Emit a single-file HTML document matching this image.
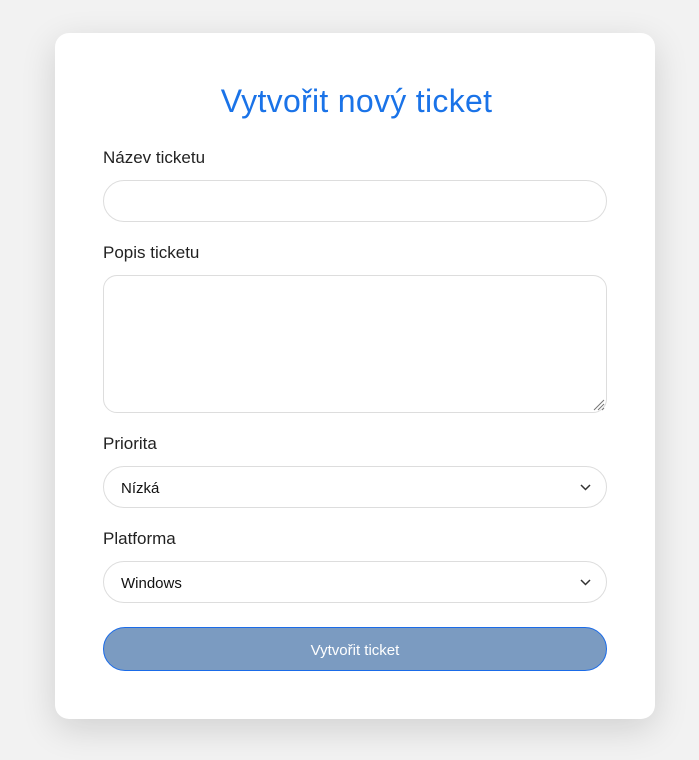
<!DOCTYPE html>
<html><head><meta charset="utf-8"><style>
*{box-sizing:border-box;margin:0;padding:0}
body{width:699px;height:760px;background:#f2f2f2;font-family:"Liberation Sans",sans-serif;position:relative;overflow:hidden}
.card{position:absolute;left:55px;top:33px;width:600px;height:686px;background:#fff;border-radius:14px;box-shadow:0 10px 35px rgba(0,0,0,.14)}
h1{position:absolute;left:0;right:0;top:83px;text-align:center;font-weight:normal;font-size:32px;color:#1a73e8;letter-spacing:0.3px;padding-left:14px}
.l{position:absolute;left:103px;font-size:17px;color:#222}
.f{position:absolute;left:103px;width:504px;border:1px solid #ddd;background:#fff}
.in{height:42px;border-radius:21px}
.ta{top:275px;height:138px;border-radius:14px}
.sel{height:42px;border-radius:21px;font-size:15px;color:#111;padding:13px 0 0 17px}
.sel svg{position:absolute;right:15px;top:17px}
.btn{position:absolute;left:103px;top:627px;width:504px;height:44px;border-radius:22px;background:#7b9bc1;border:1px solid #1a6be8;color:#fff;font-size:15px;text-align:center;line-height:45px}
</style></head><body>
<div class="card"></div>
<h1>Vytvořit nový ticket</h1>
<div class="l" style="top:148px">Název ticketu</div>
<div class="f in" style="top:180px"></div>
<div class="l" style="top:243px">Popis ticketu</div>
<div class="f ta"><svg width="14" height="14" style="position:absolute;right:1px;bottom:1px" stroke="#777"><path d="M3 13L13 3M7 13L13 7M11 13L13 11"/></svg></div>
<div class="l" style="top:434px">Priorita</div>
<div class="f sel" style="top:466px">Nízká<svg width="11" height="7" fill="none" stroke="#333" stroke-width="1.5"><path d="M1 1l4.5 4.5L10 1"/></svg></div>
<div class="l" style="top:529px">Platforma</div>
<div class="f sel" style="top:561px">Windows<svg width="11" height="7" fill="none" stroke="#333" stroke-width="1.5"><path d="M1 1l4.5 4.5L10 1"/></svg></div>
<div class="btn">Vytvořit ticket</div>
</body></html>
